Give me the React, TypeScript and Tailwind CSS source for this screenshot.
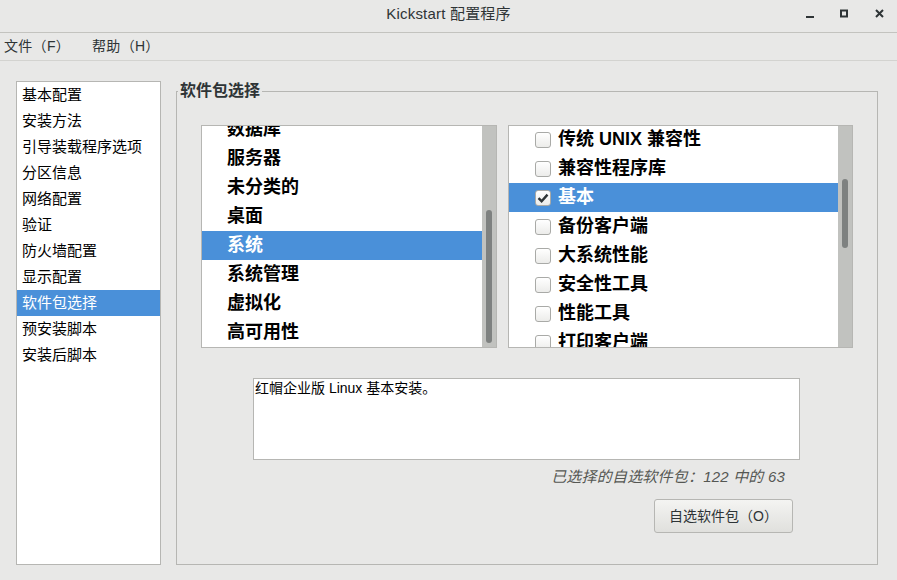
import React from "react"

const cjk = "font-['Liberation_Sans','Noto_Sans_CJK_SC',sans-serif]"

const sections = [
  "基本配置",
  "安装方法",
  "引导装载程序选项",
  "分区信息",
  "网络配置",
  "验证",
  "防火墙配置",
  "显示配置",
  "软件包选择",
  "预安装脚本",
  "安装后脚本",
]

const groups = ["数据库", "服务器", "未分类的", "桌面", "系统", "系统管理", "虚拟化", "高可用性"]

const packages = [
  { name: "传统 UNIX 兼容性", checked: false },
  { name: "兼容性程序库", checked: false },
  { name: "基本", checked: true },
  { name: "备份客户端", checked: false },
  { name: "大系统性能", checked: false },
  { name: "安全性工具", checked: false },
  { name: "性能工具", checked: false },
  { name: "打印客户端", checked: false },
]

function TitleBar() {
  return (
    <div className="relative h-[33px] shrink-0 border-b border-[#c3c3bf] bg-[#e8e8e7] flex items-center justify-center pb-[5px]">
      <span className={`${cjk} text-[15px] tracking-[0.2px] text-[#2e3436] leading-none`}>Kickstart 配置程序</span>
      <div className="absolute right-0 top-0 h-[32px] flex items-center">
        <svg width="34" height="32" viewBox="0 0 34 32">
          <rect x="11" y="16" width="8" height="2" fill="#2e3436" />
        </svg>
        <svg width="34" height="32" viewBox="0 0 34 32">
          <rect x="12" y="10.5" width="6" height="6" fill="none" stroke="#2e3436" strokeWidth="2" />
        </svg>
        <svg width="34" height="32" viewBox="0 0 34 32">
          <path d="M13 10 L20 17 M20 10 L13 17" stroke="#2e3436" strokeWidth="2" />
        </svg>
      </div>
    </div>
  )
}

function MenuBar() {
  return (
    <div className={`h-[28px] shrink-0 border-b border-[#d3d3d0] bg-[#e8e8e7] flex items-center pl-[4px] gap-[22px] ${cjk} text-[14px] tracking-[0.3px] text-[#2e3436]`}>
      <span>文件（F）</span>
      <span>帮助（H）</span>
    </div>
  )
}

function Scrollbar({ top, height }: { top: number; height: number }) {
  return (
    <div className="relative w-[14px] shrink-0 bg-[#c1c2bf]">
      <div className="absolute left-[4px] w-[6px] rounded-full bg-[#7e8180]" style={{ top, height }} />
    </div>
  )
}

function Checkbox({ checked }: { checked: boolean }) {
  return (
    <div className="w-[16px] h-[16px] rounded-[3px] border border-[#a9aaa7] bg-gradient-to-b from-white to-[#ececea] flex items-center justify-center shrink-0">
      {checked && (
        <svg width="12" height="12" viewBox="0 0 12 12">
          <path d="M1.5 6.2 L4.6 9.2 L10.5 2.6" fill="none" stroke="#2e3436" strokeWidth="2.4" />
        </svg>
      )}
    </div>
  )
}

export default function App() {
  return (
    <div className="w-[897px] h-[580px] overflow-hidden bg-[#e8e8e7] flex flex-col">
      <TitleBar />
      <MenuBar />
      <div className="flex flex-1 pl-[16px] pr-[19px] pt-[20px] pb-[15px] gap-[15px] min-h-0">
        <div className={`w-[145px] shrink-0 border border-[#b6b6b3] bg-white ${cjk} text-[15px] text-black`}>
          {sections.map((s) => (
            <div
              key={s}
              className={`h-[26px] flex items-center pl-[5px] ${s === "软件包选择" ? "bg-[#4a90d9] text-white" : ""}`}
            >
              {s}
            </div>
          ))}
        </div>

        <fieldset className="flex-1 border border-[#b6b6b3] min-w-0 flex flex-col">
          <legend className={`ml-px px-[2px] ${cjk} font-bold text-[16px] leading-[20px] text-[#2e3436]`}>软件包选择</legend>

          <div className="flex gap-[11px] px-[24px] mt-[24px]">
            <div className="w-[296px] h-[223px] border border-[#b6b6b3] bg-white flex overflow-hidden">
              <div className={`flex-1 overflow-hidden ${cjk} font-bold text-[18px] text-black`}>
                <div className="mt-[-11px]">
                  {groups.map((g) => (
                    <div
                      key={g}
                      className={`h-[29px] flex items-center pl-[25px] ${g === "系统" ? "bg-[#4a90d9] text-white" : ""}`}
                    >
                      {g}
                    </div>
                  ))}
                </div>
              </div>
              <Scrollbar top={84} height={133} />
            </div>

            <div className="flex-1 h-[223px] border border-[#b6b6b3] bg-white flex overflow-hidden">
              <div className={`flex-1 overflow-hidden ${cjk} font-bold text-[18px] text-black`}>
                <div className="mt-[-1px]">
                  {packages.map((p) => (
                    <div
                      key={p.name}
                      className={`h-[29px] flex items-center pl-[26px] gap-[7px] ${p.checked ? "bg-[#4a90d9] text-white" : ""}`}
                    >
                      <Checkbox checked={p.checked} />
                      <span>{p.name}</span>
                    </div>
                  ))}
                </div>
              </div>
              <Scrollbar top={53} height={69} />
            </div>
          </div>

          <div className="w-[547px] ml-[76px] mt-[30px] flex flex-col">
            <div className={`h-[82px] border border-[#b6b6b3] bg-white pl-px ${cjk} text-[14px] leading-[18px] text-black`}>
              红帽企业版 Linux 基本安装。
            </div>
            <div className={`mt-[7px] text-right pr-[15px] ${cjk} italic text-[15px] tracking-[0.2px] leading-[20px] text-[#555753]`}>
              已选择的自选软件包：122 中的 63
            </div>
            <button
              className={`mt-[12px] ml-auto mr-[7px] w-[139px] h-[34px] rounded-[3px] border border-[#b6b6b3] bg-gradient-to-b from-[#f4f4f2] to-[#e0e0dd] ${cjk} text-[14px] text-[#2e3436]`}
            >
              自选软件包（O）
            </button>
          </div>
        </fieldset>
      </div>
    </div>
  )
}
